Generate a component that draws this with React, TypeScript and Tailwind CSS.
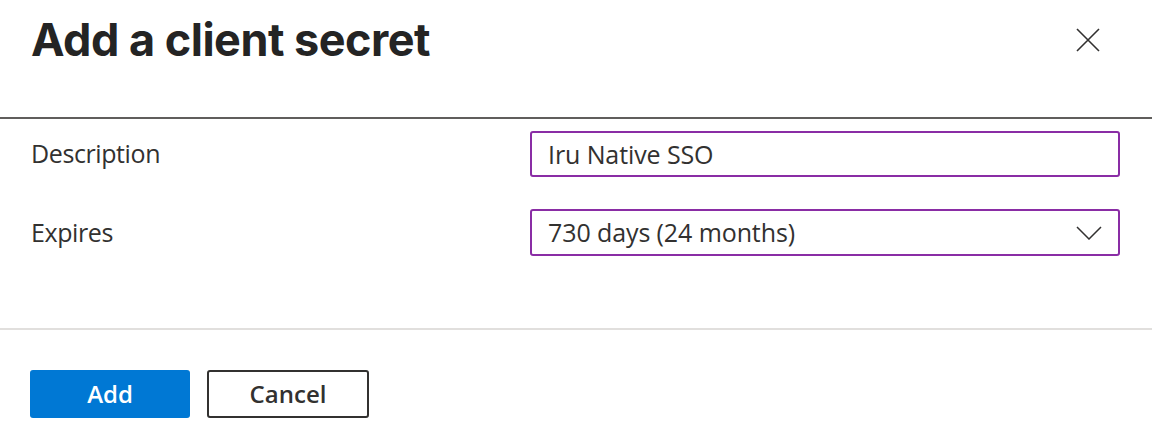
import React, { useState } from "react";

function App() {
  const [description, setDescription] = useState("Iru Native SSO");

  return (
    <div className="w-[1152px] h-[446px] bg-white text-[#323130] font-['Open_Sans',sans-serif]">
      <div className="h-[117px] flex items-start justify-between pl-[31px] pr-[52px] pt-[11px]">
        <h1 className="font-['Inter',sans-serif] font-bold text-[45px] leading-[58px] text-[#242424] tracking-[-0.5px]">
          Add a client secret
        </h1>
        <button className="mt-[17px] w-6 h-6 flex items-center justify-center">
          <svg width="24" height="24" viewBox="0 0 24 24" fill="none" stroke="#323130" strokeWidth="1.6">
            <path d="M1 1 L23 23 M23 1 L1 23" />
          </svg>
        </button>
      </div>
      <div className="h-[2px] bg-[#605e5c]" />

      <div className="h-[209px] pt-[12px] pl-[31px] pr-[32px] flex flex-col gap-[32px]">
        <div className="flex items-center justify-between">
          <label className="text-[25px] tracking-[-0.4px]">Description</label>
          <input
            value={description}
            onChange={(e) => setDescription(e.target.value)}
            className="w-[590px] h-[46px] border-2 border-[#8a2da5] rounded-[3px] px-[16px] text-[25px] tracking-[-0.1px] text-[#323130] outline-none"
          />
        </div>
        <div className="flex items-center justify-between">
          <label className="text-[25px] tracking-[-0.4px]">Expires</label>
          <div className="w-[590px] h-[47px] border-2 border-[#8a2da5] rounded-[3px] pl-[16px] pr-[16px] flex items-center justify-between">
            <span className="text-[25px] tracking-[-0.1px]">730 days (24 months)</span>
            <svg width="26" height="14" viewBox="0 0 26 14" fill="none" stroke="#323130" strokeWidth="1.5">
              <path d="M1 1 L13 13 L25 1" />
            </svg>
          </div>
        </div>
      </div>

      <div className="h-[2px] bg-[#e1dfdd]" />

      <div className="pt-[40px] pl-[30px] flex gap-[17px]">
        <button className="w-[160px] h-[48px] rounded-[3px] bg-[#0078d4] text-white text-[24px] font-semibold">
          Add
        </button>
        <button className="w-[162px] h-[48px] rounded-[3px] border-2 border-[#323130] bg-white text-[#323130] text-[24px] font-semibold">
          Cancel
        </button>
      </div>
    </div>
  );
}

export default App;
